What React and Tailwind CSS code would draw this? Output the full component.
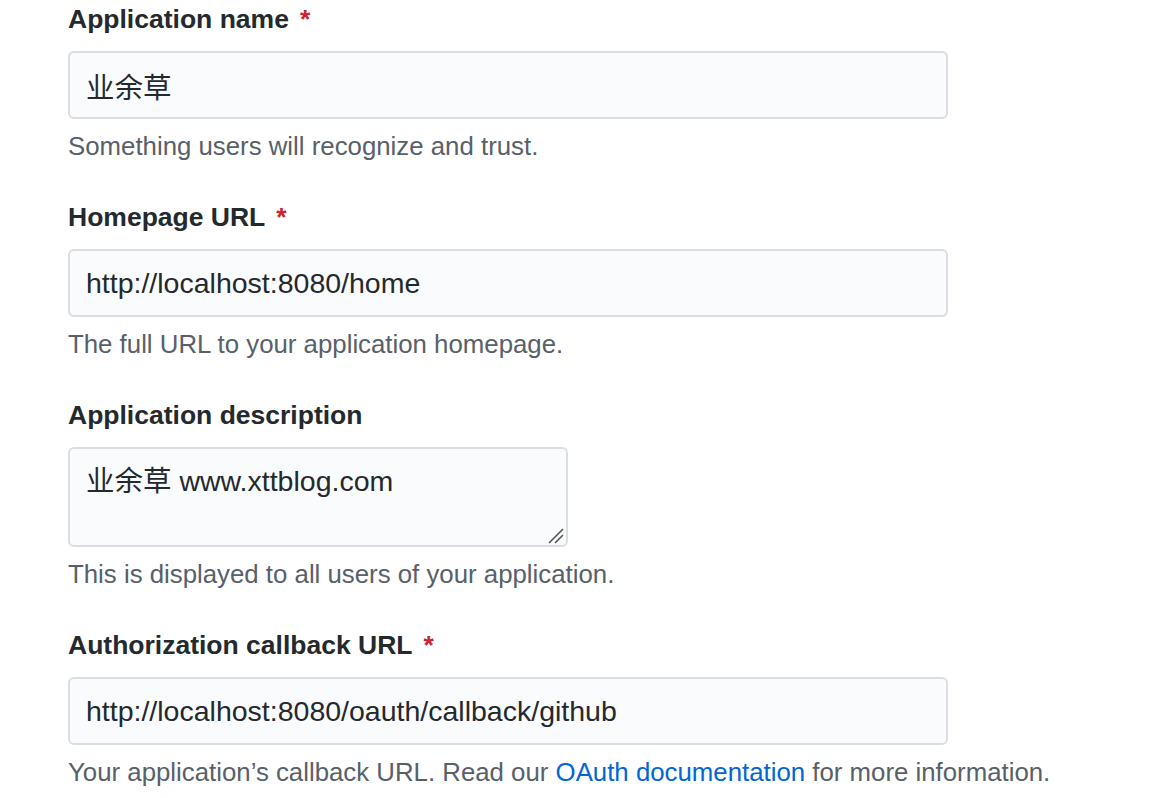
import React from "react";

const FONT = { fontFamily: '"Liberation Sans", Arial, "Noto Sans CJK SC", sans-serif' };

function Label({ children, required }) {
  return (
    <div className="h-[38px] leading-[38px] text-[26.5px] font-bold text-[#24292e] whitespace-nowrap">
      {children}
      {required && <span className="ml-[11px] text-[#cb2431]">*</span>}
    </div>
  );
}

function Help({ children }) {
  return (
    <div className="mt-[9px] h-[36px] leading-[36px] text-[25.8px] text-[#586069] whitespace-nowrap">
      {children}
    </div>
  );
}

function TextInput({ value }) {
  return (
    <input
      readOnly
      value={value}
      style={FONT}
      className="mt-[13px] block h-[68px] w-[880px] rounded-[6px] border-2 border-[#dadde1] bg-[#fafbfc] pl-4 pr-4 text-[28.5px] text-[#24292e] outline-none"
    />
  );
}

export default function App() {
  return (
    <div style={FONT} className="min-h-[798px] w-[1176px] bg-white pl-[68px]">
      <div>
        <Label required>Application name</Label>
        <TextInput value="业余草" />
        <Help>Something users will recognize and trust.</Help>
      </div>
      <div className="mt-[34px]">
        <Label required>Homepage URL</Label>
        <TextInput value="http://localhost:8080/home" />
        <Help>The full URL to your application homepage.</Help>
      </div>
      <div className="mt-[34px]">
        <Label>Application description</Label>
        <div className="relative mt-[13px] h-[100px] w-[500px]">
          <textarea
            readOnly
            value="业余草 www.xttblog.com"
            style={FONT}
            className="block h-full w-full resize-none rounded-[6px] border-2 border-[#dadde1] bg-[#fafbfc] pl-4 pr-4 pt-[14px] text-[28.5px] leading-[36px] text-[#24292e] outline-none"
          />
          <svg className="absolute right-[4px] bottom-[3px]" width="16" height="16" viewBox="0 0 16 16">
            <line x1="1" y1="15" x2="15" y2="1" stroke="#555" strokeWidth="1.6" />
            <line x1="7" y1="15" x2="15" y2="7" stroke="#555" strokeWidth="1.6" />
          </svg>
        </div>
        <Help>This is displayed to all users of your application.</Help>
      </div>
      <div className="mt-[34px]">
        <Label required>Authorization callback URL</Label>
        <TextInput value="http://localhost:8080/oauth/callback/github" />
        <Help>
          Your application’s callback URL. Read our{" "}
          <a className="text-[#0366d6]">OAuth documentation</a> for more information.
        </Help>
      </div>
    </div>
  );
}
